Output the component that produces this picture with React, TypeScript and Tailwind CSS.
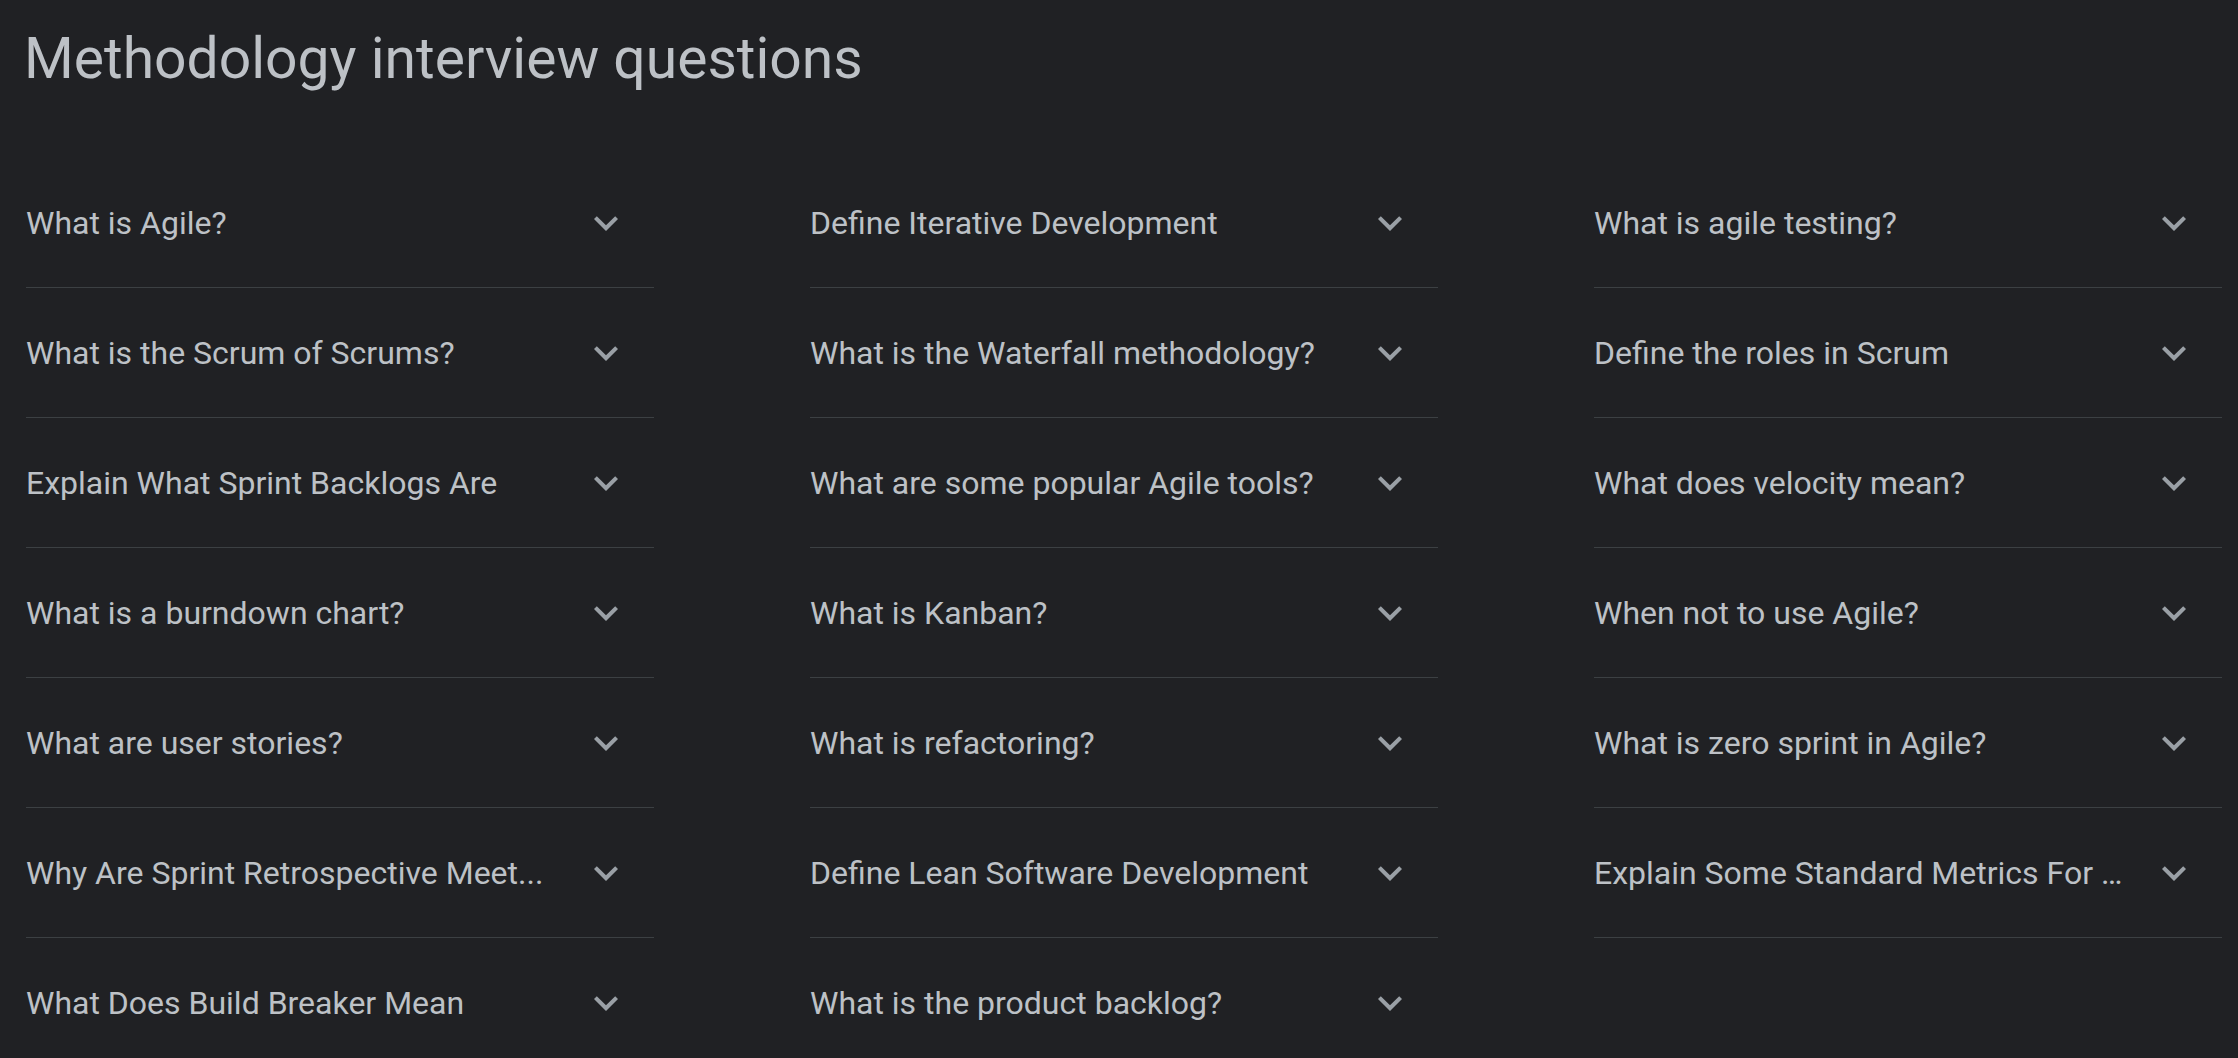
const columns: string[][] = [
  [
    'What is Agile?',
    'What is the Scrum of Scrums?',
    'Explain What Sprint Backlogs Are',
    'What is a burndown chart?',
    'What are user stories?',
    'Why Are Sprint Retrospective Meet...',
    'What Does Build Breaker Mean',
  ],
  [
    'Define Iterative Development',
    'What is the Waterfall methodology?',
    'What are some popular Agile tools?',
    'What is Kanban?',
    'What is refactoring?',
    'Define Lean Software Development',
    'What is the product backlog?',
  ],
  [
    'What is agile testing?',
    'Define the roles in Scrum',
    'What does velocity mean?',
    'When not to use Agile?',
    'What is zero sprint in Agile?',
    'Explain Some Standard Metrics For ...',
  ],
]

function ExpandMore() {
  return (
    <svg viewBox="0 0 24 24" className="w-12 h-12 fill-[#9aa0a6]">
      <path d="M16.59 8.59L12 13.17 7.41 8.59 6 10l6 6 6-6z" />
    </svg>
  )
}

function Question({ text }: { text: string }) {
  return (
    <div className="flex items-center h-[130px] border-b border-[#3c4043] pr-6">
      <span className="w-[532px] truncate text-[32px] leading-10 text-[#bdc1c6]">{text}</span>
      <div className="ml-6 flex items-center justify-center w-12 h-12 shrink-0">
        <ExpandMore />
      </div>
    </div>
  )
}

export default function App() {
  return (
    <div className="min-h-screen w-full bg-[#202124] pl-[26px] pt-[30px] font-['Roboto',_'Liberation_Sans',_sans-serif]">
      <h1 className="text-[57px] leading-none text-[#bdc1c6] -ml-[2px]">Methodology interview questions</h1>
      <div className="mt-[71px] flex gap-[156px]">
        {columns.map((col, i) => (
          <div key={i} className="w-[628px] flex flex-col">
            {col.map((q) => (
              <Question key={q} text={q} />
            ))}
          </div>
        ))}
      </div>
    </div>
  )
}
